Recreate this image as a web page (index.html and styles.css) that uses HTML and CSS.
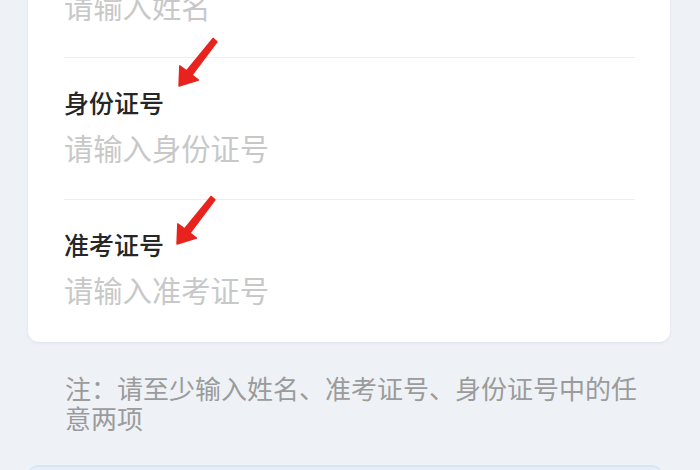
FILE: index.html
```html
<!DOCTYPE html>
<html lang="zh-CN">
<head>
<meta charset="utf-8">
<title>查询</title>
<link rel="stylesheet" href="styles.css">
</head>
<body>
<div class="page">
  <div class="card">
    <div class="field">
      <div class="label">姓名</div>
      <div class="input">请输入姓名</div>
    </div>
    <div class="field">
      <svg class="arrow arrow-id" width="50" height="55" viewBox="0 0 50 55"><polygon points="9,50 28.5,44 22,39 47,5.8 43,2.4 16.6,34.8 9.8,29.8" fill="#e8231d" stroke="#e8231d" stroke-width="1.4" stroke-linejoin="round"/></svg>
      <div class="label">身份证号</div>
      <div class="input">请输入身份证号</div>
    </div>
    <div class="field last">
      <svg class="arrow arrow-exam" width="50" height="55" viewBox="0 0 50 55"><polygon points="9,50 28.5,44 22,39 47,5.8 43,2.4 16.6,34.8 9.8,29.8" fill="#e8231d" stroke="#e8231d" stroke-width="1.4" stroke-linejoin="round"/></svg>
      <div class="label">准考证号</div>
      <div class="input">请输入准考证号</div>
    </div>
  </div>
  <p class="note">注：请至少输入姓名、准考证号、身份证号中的任意两项</p>
  <div class="button"></div>
</div>
</body>
</html>
```

FILE: styles.css
```css
html, body {
  margin: 0;
  padding: 0;
  background: #eef2f6;
  font-family: "Noto Sans CJK SC", "Noto Sans", sans-serif;
  overflow: hidden;
}

.page {
  width: 700px;
  height: 470px;
  overflow: hidden;
}

.card {
  margin: -84px 30px 0 28px;
  padding: 0 35px 0 36px;
  background: #ffffff;
  border-radius: 0 0 11px 11px;
  box-shadow: 0 1px 3px rgba(150, 160, 175, 0.18);
}

.field {
  position: relative;
  padding: 27px 0 24px;
  border-bottom: 1px solid #eeeeee;
}

.field.last {
  border-bottom: none;
  padding-bottom: 25px;
}

.label {
  font-size: 25px;
  line-height: 34px;
  color: #262626;
  font-weight: 500;
}

.input {
  font-size: 29.3px;
  line-height: 56px;
  color: #c8c8c8;
}

.arrow {
  position: absolute;
}

.arrow-id {
  left: 106px;
  top: -22px;
}

.arrow-exam {
  left: 104px;
  top: -6px;
}

.note {
  margin: 31px 0 0 65px;
  width: 576px;
  font-size: 26px;
  line-height: 30px;
  color: #9b9b9b;
}

.button {
  margin: 32px 38px 0 28px;
  height: 40px;
  background: #e4edf9;
  border-top: 2px solid #d6e4f6;
  border-radius: 10px 10px 0 0;
}
```
